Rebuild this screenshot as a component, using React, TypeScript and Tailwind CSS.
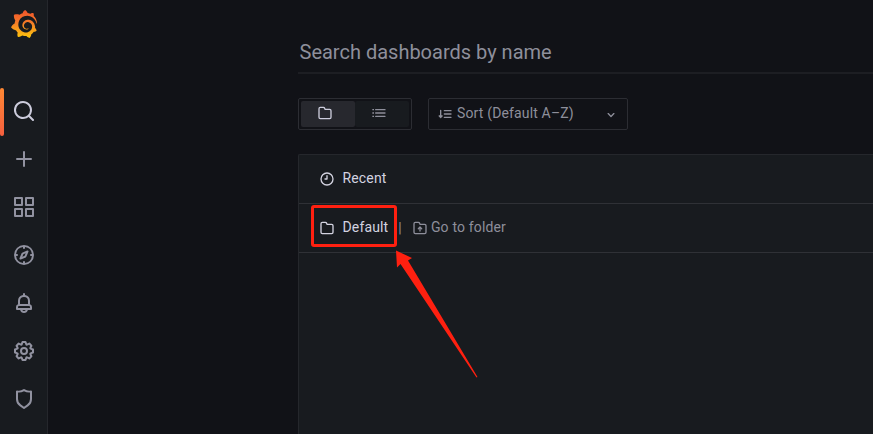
import React from 'react';
import { SiGrafana } from 'react-icons/si';

const paths = {
  search:
    'M21.71,20.29,18,16.61A9,9,0,1,0,16.61,18l3.68,3.68a1,1,0,0,0,1.42,0A1,1,0,0,0,21.71,20.29ZM11,18a7,7,0,1,1,7-7A7,7,0,0,1,11,18Z',
  plus: 'M19,11H13V5a1,1,0,0,0-2,0v6H5a1,1,0,0,0,0,2h6v6a1,1,0,0,0,2,0V13h6a1,1,0,0,0,0-2Z',
  apps: 'M10,13H3a1,1,0,0,0-1,1v7a1,1,0,0,0,1,1h7a1,1,0,0,0,1-1V14A1,1,0,0,0,10,13ZM9,20H4V15H9ZM21,2H14a1,1,0,0,0-1,1v7a1,1,0,0,0,1,1h7a1,1,0,0,0,1-1V3A1,1,0,0,0,21,2ZM20,9H15V4h5Zm1,4H14a1,1,0,0,0-1,1v7a1,1,0,0,0,1,1h7a1,1,0,0,0,1-1V14A1,1,0,0,0,21,13Zm-1,7H15V15h5ZM10,2H3A1,1,0,0,0,2,3v7a1,1,0,0,0,1,1h7a1,1,0,0,0,1-1V3A1,1,0,0,0,10,2ZM9,9H4V4H9Z',
  compass:
    'M12,2A10,10,0,1,0,22,12,10,10,0,0,0,12,2Zm1,17.93V19a1,1,0,0,0-2,0v.93A8,8,0,0,1,4.07,13H5a1,1,0,0,0,0-2H4.07A8,8,0,0,1,11,4.07V5a1,1,0,0,0,2,0V4.07A8,8,0,0,1,19.93,11H19a1,1,0,0,0,0,2h.93A8,8,0,0,1,13,19.93ZM15.14,7.55l-5,2.12a1,1,0,0,0-.52.52l-2.12,5a1,1,0,0,0,.21,1.1,1,1,0,0,0,.7.3.93.93,0,0,0,.4-.09l5-2.12a1,1,0,0,0,.52-.52l2.12-5a1,1,0,0,0-1.31-1.31Zm-2.49,5.1-2.28,1,1-2.28,2.28-1Z',
  bell: 'M18,13.18V10a6,6,0,0,0-5-5.91V3a1,1,0,0,0-2,0V4.09A6,6,0,0,0,6,10v3.18A3,3,0,0,0,4,16v2a1,1,0,0,0,1,1H8.14a4,4,0,0,0,7.72,0H19a1,1,0,0,0,1-1V16A3,3,0,0,0,18,13.18ZM8,10a4,4,0,0,1,8,0v3H8Zm4,10a2,2,0,0,1-1.72-1h3.44A2,2,0,0,1,12,20Zm6-3H6V16a1,1,0,0,1,1-1H17a1,1,0,0,1,1,1Z',
  cog: 'M21.32,9.55l-1.89-.63.89-1.78A1,1,0,0,0,20.13,6L18,3.87a1,1,0,0,0-1.15-.19l-1.78.89-.63-1.89A1,1,0,0,0,13.5,2h-3a1,1,0,0,0-.95.68L8.92,4.57,7.14,3.68A1,1,0,0,0,6,3.87L3.87,6a1,1,0,0,0-.19,1.15l.89,1.78-1.89.63A1,1,0,0,0,2,10.5v3a1,1,0,0,0,.68.95l1.89.63-.89,1.78A1,1,0,0,0,3.87,18L6,20.13a1,1,0,0,0,1.15.19l1.78-.89.63,1.89a1,1,0,0,0,.95.68h3a1,1,0,0,0,.95-.68l.63-1.89,1.78.89A1,1,0,0,0,18,20.13L20.13,18a1,1,0,0,0,.19-1.15l-.89-1.78,1.89-.63A1,1,0,0,0,22,13.5v-3A1,1,0,0,0,21.32,9.55ZM20,12.78l-1.2.4A2,2,0,0,0,17.64,16l.57,1.14-1.1,1.1L16,17.64a2,2,0,0,0-2.79,1.16l-.4,1.2H11.22l-.4-1.2A2,2,0,0,0,8,17.64l-1.14.57-1.1-1.1L6.36,16A2,2,0,0,0,5.2,13.18L4,12.78V11.22l1.2-.4A2,2,0,0,0,6.36,8L5.79,6.89l1.1-1.1L8,6.36A2,2,0,0,0,10.82,5.2l.4-1.2h1.56l.4,1.2A2,2,0,0,0,16,6.36l1.14-.57,1.1,1.1L17.64,8a2,2,0,0,0,1.16,2.79l1.2.4ZM12,8a4,4,0,1,0,4,4A4,4,0,0,0,12,8Zm0,6a2,2,0,1,1,2-2A2,2,0,0,1,12,14Z',
  shield:
    'M19.63,3.65a1,1,0,0,0-.84-.2,8,8,0,0,1-6.22-1.27,1,1,0,0,0-1.14,0A8,8,0,0,1,5.21,3.45a1,1,0,0,0-.84.2A1,1,0,0,0,4,4.43v7.45a9,9,0,0,0,3.77,7.33l3.65,2.6a1,1,0,0,0,1.16,0l3.65-2.6A9,9,0,0,0,20,11.88V4.43A1,1,0,0,0,19.63,3.65ZM18,11.88a7,7,0,0,1-2.93,5.7L12,19.77,8.93,17.58A7,7,0,0,1,6,11.88V5.58a10,10,0,0,0,6-1.39,10,10,0,0,0,6,1.39Z',
  folder:
    'M19,5.5H12.72l-.32-1a3,3,0,0,0-2.84-2H5a3,3,0,0,0-3,3v13a3,3,0,0,0,3,3H19a3,3,0,0,0,3-3V8.5A3,3,0,0,0,19,5.5Zm1,13a1,1,0,0,1-1,1H5a1,1,0,0,1-1-1V5.5a1,1,0,0,1,1-1H9.56a1,1,0,0,1,.95.68l.54,1.64A1,1,0,0,0,12,7.5h7a1,1,0,0,1,1,1Z',
  folderUpload:
    'M19,5.5H12.72l-.32-1a3,3,0,0,0-2.84-2H5a3,3,0,0,0-3,3v13a3,3,0,0,0,3,3H19a3,3,0,0,0,3-3V8.5A3,3,0,0,0,19,5.5Zm1,13a1,1,0,0,1-1,1H5a1,1,0,0,1-1-1V5.5a1,1,0,0,1,1-1H9.56a1,1,0,0,1,.95.68l.54,1.64A1,1,0,0,0,12,7.5h7a1,1,0,0,1,1,1ZM12.71,9.79a1,1,0,0,0-1.42,0l-2.5,2.5a1,1,0,0,0,1.42,1.42l.79-.8V16.5a1,1,0,0,0,2,0V12.91l.79.8a1,1,0,0,0,1.42-1.42Z',
  clock:
    'M12,2A10,10,0,1,0,22,12,10,10,0,0,0,12,2Zm0,18a8,8,0,1,1,8-8A8,8,0,0,1,12,20ZM12,6a1,1,0,0,0-1,1v4H9a1,1,0,0,0,0,2h3a1,1,0,0,0,1-1V7A1,1,0,0,0,12,6Z',
  list: 'M2,6H4.500V8H2ZM2,11H4.500V13H2ZM2,16H4.500V18H2ZM7,6H21a1,1,0,0,1,0,2H7A1,1,0,0,1,7,6ZM7,11H21a1,1,0,0,1,0,2H7a1,1,0,0,1,0-2ZM7,16H21a1,1,0,0,1,0,2H7a1,1,0,0,1,0-2Z',
  sort: 'M5.500,5.500A1,1,0,0,0,4.500,6.500V14H3a.8,.8,0,0,0-.6,1.300l2.500,2.700a.8,.8,0,0,0,1.200,0l2.500-2.700A.8,.8,0,0,0,8,14H6.500V6.500A1,1,0,0,0,5.500,5.500ZM11,6H21a1,1,0,0,1,0,2H11a1,1,0,0,1,0-2ZM11,11H21a1,1,0,0,1,0,2H11a1,1,0,0,1,0-2ZM11,16H21a1,1,0,0,1,0,2H11a1,1,0,0,1,0-2Z',
  angleDown:
    'M17,9.17a1,1,0,0,0-1.41,0L12,12.71,8.46,9.17a1,1,0,0,0-1.41,0,1,1,0,0,0,0,1.42l4.24,4.24a1,1,0,0,0,1.42,0L17,10.59A1,1,0,0,0,17,9.17Z',
};

function Icon({ name, className = 'size-4' }: { name: keyof typeof paths; className?: string }) {
  return (
    <svg viewBox="0 0 24 24" fill="currentColor" className={`shrink-0 ${className}`}>
      <path d={paths[name]} />
    </svg>
  );
}

const menu: (keyof typeof paths)[] = ['search', 'plus', 'apps', 'compass', 'bell', 'cog', 'shield'];

function Sidebar() {
  return (
    <nav className="flex w-12 shrink-0 flex-col border-r border-[#25272c] bg-[#181b1f] text-[#9192a0]">
      <div className="mb-10 flex h-12 w-12 items-center justify-center">
        <svg className="absolute size-0">
          <defs>
            <linearGradient id="flame" x1="0" y1="0" x2="0" y2="1">
              <stop offset="0" stopColor="#f0522b" />
              <stop offset="0.45" stopColor="#f47b28" />
              <stop offset="1" stopColor="#fdc80c" />
            </linearGradient>
          </defs>
        </svg>
        <SiGrafana className="size-7 [&_path]:fill-[url(#flame)]" />
      </div>
      {menu.map((name, i) => (
        <div key={name} className="flex h-12 w-12 shrink-0 items-center">
          <div className={i === 0 ? 'h-12 w-1 rounded-xs bg-linear-to-b from-[#ff8833] to-[#f55f3e]' : 'w-1'} />
          <Icon name={name} className={i === 0 ? 'mb-0.5 ml-2 size-6 text-[#ccccdc]' : 'mb-0.5 ml-2 size-6'} />
        </div>
      ))}
    </nav>
  );
}

function Toolbar() {
  return (
    <div className="mt-6 flex h-8 gap-4">
      <div className="flex w-[114px] rounded-xs border border-[#2c2d33] p-0.5">
        <div className="flex flex-1 items-center rounded-xs bg-[#27282e] pl-4 text-[#ccccdc]">
          <Icon name="folder" className="mb-0.5 size-4" />
        </div>
        <div className="flex flex-1 items-center rounded-xs bg-[#181b1f] pl-4 text-[#8e8f9b]">
          <Icon name="list" className="mb-0.5 size-4" />
        </div>
      </div>
      <div className="flex w-[200px] items-center rounded-xs border border-[#2c2d33] pr-2 pl-2 text-[#8e8f9b]">
        <Icon name="sort" />
        <span className="ml-1 flex-1 pb-0.5">Sort (Default A–Z)</span>
        <Icon name="angleDown" className="mt-0.5 size-4" />
      </div>
    </div>
  );
}

function Results() {
  return (
    <div className="mt-6 flex-1 rounded-tl-xs border-t border-l border-[#25272c] bg-[#181b1f] text-[#d3d3e0]">
      <div className="flex h-[49px] items-center border-b border-[#2f3136] pl-5">
        <Icon name="clock" />
        <span className="ml-[7.5px] pb-0.5">Recent</span>
      </div>
      <div className="relative flex h-[49px] items-center border-b border-[#2f3136] pl-5">
        <Icon name="folder" />
        <span className="ml-[7.5px] pb-0.5">Default</span>
        <span className="ml-2.5 text-[#8e8f9b]">|</span>
        <Icon name="folderUpload" className="mb-px ml-2.5 size-4 text-[#8e8f9b]" />
        <span className="ml-[3px] pb-0.5 text-[#8e8f9b]">Go to folder</span>
        <div className="absolute top-px left-3 h-[42px] w-[86px] rounded-[3px] border-3 border-[#ff2010]" />
        <svg
          viewBox="0 0 82 129"
          className="absolute top-[46px] left-[97px] h-[129px] w-[82px]"
          fill="#ff2010"
        >
          <path d="M0 0.500L16 8L12 10.500L81.500 127L80.500 127.500L4.500 14L1 17.500Z" />
        </svg>
      </div>
    </div>
  );
}

export default function App() {
  return (
    <div className="flex h-[434px] w-[873px] overflow-hidden bg-[#111217] font-[Roboto,sans-serif] text-sm tracking-[0.15px]">
      <Sidebar />
      <main className="ml-[250px] flex flex-1 flex-col pt-8">
        <div className="flex h-[42px] items-start border-b-2 border-[#1d1e23] text-xl leading-10 tracking-normal text-[#8e8f9b]">
          <span className="pl-[1.5px]">Search dashboards by name</span>
        </div>
        <Toolbar />
        <Results />
      </main>
    </div>
  );
}
